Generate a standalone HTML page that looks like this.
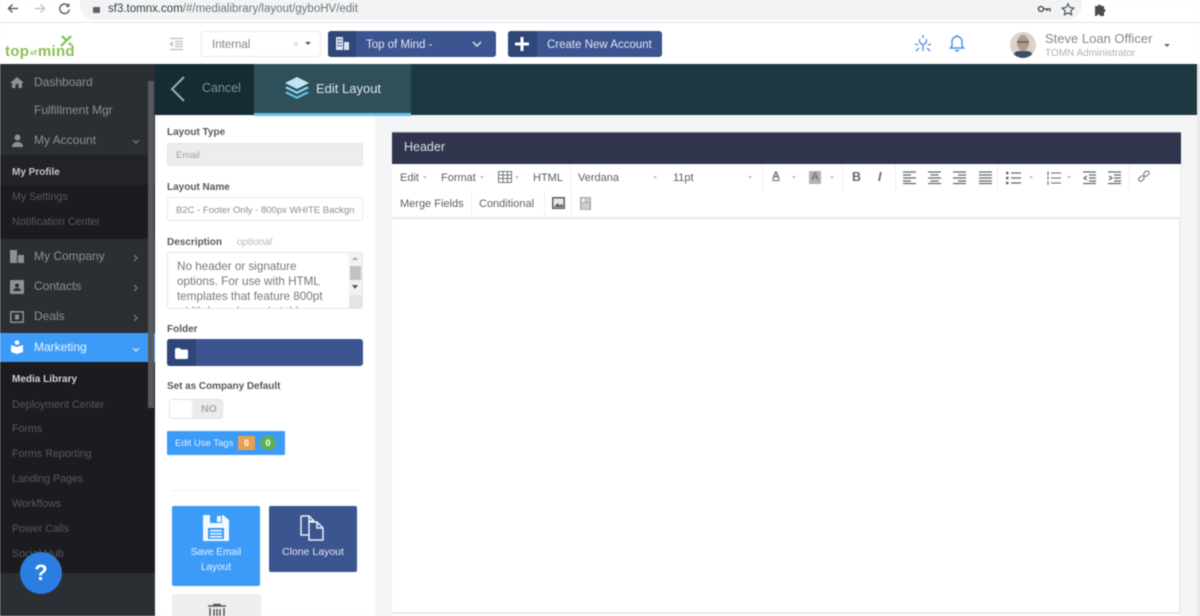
<!DOCTYPE html>
<html lang="en"><head><meta charset="utf-8"><title>Edit Layout</title>
<style>
*{box-sizing:border-box}
html,body{margin:0;padding:0;width:1200px;height:616px;overflow:hidden}
body{background:#f4f5f6;font-family:"Liberation Sans",sans-serif}
#w{position:relative;width:1200px;height:616px;overflow:hidden;filter:blur(.4px);background:#f4f5f6}
.a{position:absolute}
.t{position:absolute;white-space:nowrap;line-height:1}
svg{position:absolute;overflow:visible}
.side{color:#8d9094;font-size:12px}
.sub{color:#55585c;font-size:10.7px}
.lbl{color:#55595d;font-size:10px;font-weight:bold}
.tb{color:#5c5f63;font-size:11px}
.sep{position:absolute;width:1px;background:#eeeeee}
.caret{position:absolute;width:0;height:0;border-left:2.5px solid transparent;border-right:2.5px solid transparent;border-top:3px solid #c4c4c4}
</style></head><body><div id="w">
<!-- browser bar -->
<div class="a" style="left:0;top:0;width:1200px;height:23px;background:#fff;border-bottom:1px solid #e6e6e8"></div>
<div class="a" style="left:80px;top:-10px;width:1002px;height:30px;background:#f1f3f4;border-radius:15px"></div>
<svg style="left:0;top:0" width="100" height="20" fill="none" stroke="#5f6368" stroke-width="1.5"><path d="M18 8.5H9M12.5 4.5L8.5 8.5l4 4"/><path d="M35 8.5h9M40.500 4.500l4 4-4 4" stroke="#c3c5c8"/><path d="M68.500 6a4.800 4.800 0 1 0 .8 3.500"/><path d="M69.500 3v4h-4" fill="#5f6368" stroke="none"/></svg>
<div class="a" style="left:93px;top:7px;width:7px;height:6px;background:#5f6368;border-radius:1px"></div>
<div class="t" style="left:108px;top:4px;font-size:11.500px;color:#72767a"><span style="color:#3b3f43">sf3.tomnx.com</span>/#/medialibrary/layout/gyboHV/edit</div>
<svg style="left:1035px;top:3px" width="80" height="14"><circle cx="6" cy="6" r="2.500" fill="none" stroke="#55585c" stroke-width="1.500"/><path d="M8 6h7v2.500M12 6v2" fill="none" stroke="#55585c" stroke-width="1.500"/><path d="M33 .8l1.800 3.700 4 .5-3 2.800.8 4-3.600-2-3.600 2 .8-4-3-2.800 4-.5z" fill="none" stroke="#55585c" stroke-width="1.200"/><path d="M60 3h3a1.500 1.500 0 0 1 3 0h3v3a1.500 1.500 0 0 1 0 3v4h-4a1.500 1.500 0 0 0-3 0h-2z" fill="#4a4d51"/></svg>
<!-- top header -->
<div class="a" style="left:0;top:23px;width:1200px;height:41px;background:#fff"></div>
<div class="t" style="left:5px;top:44px;font-size:15px;font-weight:bold;color:#8abf55;letter-spacing:.3px">top<span style="font-size:7px;vertical-align:1px;letter-spacing:0;padding:0 1px">of</span>mind</div>
<svg style="left:58px;top:34px" width="16" height="14" fill="none" stroke="#7fc04a" stroke-width="2.200"><path d="M3 12L13 2M4 2l4 4"/><circle cx="12" cy="10" r="1.500" fill="#7fc04a" stroke="none"/></svg>
<svg style="left:169px;top:37px" width="15" height="14" fill="none" stroke="#a9acaf" stroke-width="1"><path d="M1 1.500h13M6 4.500h8M6 7h8M6 9.500h8M1 12.500h13"/><path d="M4 5L1.500 7 4 9" stroke-width="1.200"/></svg>
<div class="a" style="left:201px;top:31px;width:120px;height:26px;background:#fff;border:1px solid #e9eaeb;border-radius:3px"></div>
<div class="t" style="left:212px;top:40px;font-size:11.500px;color:#808488">Internal</div>
<div class="t" style="left:293px;top:40px;font-size:10px;color:#c0c2c4">×</div>
<div class="a" style="left:305px;top:42px;width:0;height:0;border-left:3px solid transparent;border-right:3px solid transparent;border-top:3px solid #55585c"></div>
<div class="a" style="left:328px;top:31px;width:168px;height:26px;background:#3c5590;border-radius:3px"></div>
<div class="a" style="left:328px;top:31px;width:28px;height:26px;background:#2f4679;border-radius:3px 0 0 3px"></div>
<svg style="left:335px;top:36px" width="15" height="15" fill="#dfe5f2"><path d="M1 1h7v13H1zM9 6h5v8H9z"/><path d="M2.500 3h1.500v1.500H2.500zM5 3h1.500v1.500H5zM2.500 6h1.500v1.500H2.500zM5 6h1.500v1.500H5zM2.500 9h1.500v1.500H2.500zM5 9h1.500v1.500H5z" fill="#3c5590"/></svg>
<div class="t" style="left:366px;top:40px;font-size:11.500px;color:#e2e7f2">Top of Mind -</div>
<svg style="left:472px;top:41px" width="10" height="7" fill="none" stroke="#dfe5f2" stroke-width="1.500"><path d="M1 1l4 4 4-4"/></svg>
<div class="a" style="left:508px;top:31px;width:154px;height:26px;background:#3c5590;border-radius:3px"></div>
<div class="a" style="left:508px;top:31px;width:29px;height:26px;background:#2f4679;border-radius:3px 0 0 3px"></div>
<svg style="left:515px;top:37px" width="14" height="14" fill="#fff"><path d="M5.500 0h3v5.500H14v3H8.500V14h-3V8.500H0v-3h5.500z"/></svg>
<div class="t" style="left:547px;top:40px;font-size:11.500px;color:#dfe5f2">Create New Account</div>
<svg style="left:914px;top:34px" width="18" height="19" fill="none" stroke="#4e97e8" stroke-width="1.400"><path d="M9 1v3M6 5a3.500 3.500 0 1 0 6 0"/><path d="M9 10v7M4 11l-3-1M14 11l3-1M5 14l-3 3M13 14l3 3"/></svg>
<svg style="left:949px;top:34px" width="16" height="18" fill="none" stroke="#4e97e8" stroke-width="1.500"><path d="M3 12V7.500a5 5 0 0 1 10 0V12l1.500 2h-13z"/><path d="M6.500 15.500a1.500 1.500 0 0 0 3 0"/><path d="M8 1v1.500"/></svg>
<div class="a" style="left:1010px;top:32px;width:26px;height:26px;border-radius:50%;background:#d9d4c8;overflow:hidden"><div class="a" style="left:7px;top:3px;width:12px;height:16px;border-radius:50%;background:#b39a88"></div><div class="a" style="left:7px;top:9px;width:12px;height:2px;background:#6a6d70"></div><div class="a" style="left:3px;top:19px;width:20px;height:9px;border-radius:6px 6px 0 0;background:#3b5068"></div></div>
<div class="t" style="left:1045px;top:32px;font-size:13px;color:#85888c">Steve Loan Officer</div>
<div class="t" style="left:1045px;top:49px;font-size:10px;color:#aeb1b4">TOMN Administrator</div>
<div class="a" style="left:1164px;top:44px;width:0;height:0;border-left:3px solid transparent;border-right:3px solid transparent;border-top:3px solid #66696d"></div>
<!-- sidebar -->
<div class="a" style="left:0;top:64px;width:155px;height:552px;background:#2b2e33"></div>
<div class="a" style="left:0;top:155px;width:155px;height:84px;background:#1b1c20"></div>
<div class="a" style="left:0;top:155px;width:155px;height:30px;background:#212327"></div>
<div class="a" style="left:0;top:362px;width:155px;height:211px;background:#1b1c20"></div>
<div class="a" style="left:0;top:333px;width:155px;height:29px;background:#3d9bf8"></div>
<div class="a" style="left:148px;top:81px;width:6px;height:327px;background:#57595c"></div>
<svg style="left:10px;top:76px" width="14" height="12" fill="#8f9195"><path d="M7 1L0 7h2v5h3.500V8h3v4H12V7h2z"/></svg>
<div class="t side" style="left:34px;top:76px">Dashboard</div>
<div class="t side" style="left:34px;top:104px">Fulfillment Mgr</div>
<svg style="left:11px;top:134px" width="13" height="13" fill="#8f9195"><circle cx="6.500" cy="3.500" r="3"/><path d="M1 13c0-3 2-5 5.500-5S12 10 12 13z"/></svg>
<div class="t side" style="left:34px;top:134px">My Account</div>
<svg style="left:132px;top:139px" width="8" height="5" fill="none" stroke="#7c7f83" stroke-width="1.200"><path d="M1 1l3 3 3-3"/></svg>
<div class="t" style="left:12px;top:168px;font-size:10px;font-weight:bold;color:#c4c6c8">My Profile</div>
<div class="t sub" style="left:12px;top:192px">My Settings</div>
<div class="t sub" style="left:12px;top:217px">Notification Center</div>
<svg style="left:10px;top:250px" width="14" height="13" fill="#8f9195"><path d="M0 0h7v13H0zM8 5h6v8H8z"/></svg>
<div class="t side" style="left:34px;top:250px">My Company</div>
<svg style="left:133px;top:254px" width="5" height="8" fill="none" stroke="#7c7f83" stroke-width="1.200"><path d="M1 1l3 3-3 3"/></svg>
<svg style="left:10px;top:280px" width="14" height="14" fill="#8f9195"><path d="M1 0h12a1 1 0 0 1 1 1v12a1 1 0 0 1-1 1H1a1 1 0 0 1-1-1V1a1 1 0 0 1 1-1z"/><circle cx="7" cy="5.500" r="2" fill="#2b2e33"/><path d="M3 11c0-2 2-3 4-3s4 1 4 3z" fill="#2b2e33"/></svg>
<div class="t side" style="left:34px;top:280px">Contacts</div>
<svg style="left:133px;top:284px" width="5" height="8" fill="none" stroke="#7c7f83" stroke-width="1.200"><path d="M1 1l3 3-3 3"/></svg>
<svg style="left:10px;top:311px" width="14" height="12" fill="none" stroke="#8f9195" stroke-width="1.500"><rect x=".8" y=".8" width="12.400" height="10.400"/><rect x="5" y="3.500" width="4" height="5" fill="#8f9195" stroke="none"/></svg>
<div class="t side" style="left:34px;top:310px">Deals</div>
<svg style="left:133px;top:314px" width="5" height="8" fill="none" stroke="#7c7f83" stroke-width="1.200"><path d="M1 1l3 3-3 3"/></svg>
<svg style="left:10px;top:340px" width="14" height="14" fill="#fff"><circle cx="7" cy="2.500" r="2.300"/><path d="M1 5l6 2 6-2v7l-6 2-6-2z"/></svg>
<div class="t" style="left:34px;top:341px;font-size:12px;color:#e9f3fe">Marketing</div>
<svg style="left:132px;top:347px" width="8" height="5" fill="none" stroke="#d9ebfe" stroke-width="1.200"><path d="M1 1l3 3 3-3"/></svg>
<div class="t" style="left:12px;top:375px;font-size:10px;font-weight:bold;color:#cfd1d3">Media Library</div>
<div class="t sub" style="left:12px;top:400px">Deployment Center</div>
<div class="t sub" style="left:12px;top:424px">Forms</div>
<div class="t sub" style="left:12px;top:449px">Forms Reporting</div>
<div class="t sub" style="left:12px;top:474px">Landing Pages</div>
<div class="t sub" style="left:12px;top:499px">Workflows</div>
<div class="t sub" style="left:12px;top:524px">Power Calls</div>
<div class="t sub" style="left:12px;top:549px">Social Hub</div>
<div class="a" style="left:20px;top:552px;width:42px;height:42px;border-radius:50%;background:#2a7de1"></div>
<div class="t" style="left:20px;top:562px;width:42px;text-align:center;font-size:22px;font-weight:bold;color:#fff">?</div>
<!-- teal bar -->
<div class="a" style="left:155px;top:64px;width:1045px;height:51px;background:#1c3942"></div>
<div class="a" style="left:155px;top:64px;width:99px;height:51px;background:#152c34"></div>
<div class="a" style="left:254px;top:64px;width:157px;height:52px;background:#2f5059;border-bottom:3px solid #62c4ef"></div>
<svg style="left:170px;top:75px" width="16" height="28" fill="none" stroke="#9fa9ad" stroke-width="2"><path d="M14 2L2 14l12 12"/></svg>
<div class="t" style="left:202px;top:82px;font-size:12.500px;color:#84908f">Cancel</div>
<svg style="left:284px;top:76px" width="26" height="25"><path d="M13 1L25 7 13 13 1 7z" fill="#bfe6f7"/><path d="M3 10.500L13 15.500 23 10.500 25 12 13 18 1 12z" fill="#8fd2f1"/><path d="M3 15.500L13 20.500 23 15.500 25 17 13 23 1 17z" fill="#62bfea"/></svg>
<div class="t" style="left:316px;top:82px;font-size:13px;color:#dfe7e9">Edit Layout</div>
<!-- form panel -->
<div class="a" style="left:155px;top:116px;width:220px;height:500px;background:#fff"></div>
<div class="t lbl" style="left:167px;top:128px">Layout Type</div>
<div class="a" style="left:167px;top:143px;width:196px;height:23px;background:#ecedef;border:1px solid #e3e4e6;border-radius:2px"></div>
<div class="t" style="left:176px;top:151px;font-size:9.500px;color:#9a9d9f">Email</div>
<div class="t lbl" style="left:167px;top:183px">Layout Name</div>
<div class="a" style="left:167px;top:197px;width:196px;height:24px;background:#fff;border:1px solid #e8e9ea;border-radius:2px"></div>
<div class="t" style="left:176px;top:206px;font-size:9.500px;color:#8a8d90;width:182px;overflow:hidden">B2C - Footer Only - 800px WHITE Backgn</div>
<div class="t lbl" style="left:167px;top:238px">Description</div>
<div class="t" style="left:237px;top:238px;font-size:10px;font-style:italic;color:#b5b7b9">optional</div>
<div class="a" style="left:167px;top:252px;width:196px;height:57px;background:#fff;border:1px solid #e4e5e6;border-radius:3px;overflow:hidden"><div style="padding:6px 0 0 9px;font-size:11.700px;line-height:15px;color:#75787b;width:178px">No header or signature<br>options. For use with HTML<br>templates that feature 800pt<br>width by a dynamic table</div></div>
<div class="a" style="left:349px;top:253px;width:13px;height:55px;background:#f2f2f2"></div>
<div class="a" style="left:350px;top:266px;width:11px;height:14px;background:#c2c2c2"></div>
<div class="a" style="left:352px;top:285px;width:0;height:0;border-left:3px solid transparent;border-right:3px solid transparent;border-top:4px solid #55585c"></div>
<div class="a" style="left:352px;top:257px;width:0;height:0;border-left:3px solid transparent;border-right:3px solid transparent;border-bottom:3px solid #a9a9a9"></div>
<div class="a" style="left:349px;top:295px;width:13px;height:13px;background:#e4e4e4"></div>
<div class="t lbl" style="left:167px;top:325px">Folder</div>
<div class="a" style="left:167px;top:339px;width:196px;height:27px;background:#3c5590;border-radius:3px"></div>
<div class="a" style="left:167px;top:339px;width:29px;height:27px;background:#2f4679;border-radius:3px 0 0 3px"></div>
<svg style="left:175px;top:348px" width="13" height="11" fill="#fff"><path d="M0 1.500C0 .700.600 0 1.400 0H5l1 1.500h5.600c.8 0 1.400.6 1.400 1.400v6.700c0 .8-.6 1.400-1.400 1.400H1.400C.6 11 0 10.400 0 9.600z"/></svg>
<div class="t lbl" style="left:167px;top:382px;letter-spacing:-.05px">Set as Company Default</div>
<div class="a" style="left:169px;top:399px;width:54px;height:20px;background:#ebebec;border:1px solid #e2e2e3;border-radius:3px"></div>
<div class="a" style="left:170px;top:400px;width:22px;height:18px;background:#fff;border-radius:2px"></div>
<div class="t" style="left:201px;top:404px;font-size:10.500px;font-weight:bold;color:#a8aaac">NO</div>
<div class="a" style="left:167px;top:431px;width:118px;height:24px;background:#3d9bf8;border-radius:1px"></div>
<div class="t" style="left:175px;top:439px;font-size:9.500px;color:#dfeefe">Edit Use Tags</div>
<div class="a" style="left:238px;top:436px;width:17px;height:14px;background:#e8a14e;border-radius:1px"></div>
<div class="t" style="left:238px;top:439px;width:17px;text-align:center;font-size:9px;font-weight:bold;color:#fff">0</div>
<div class="a" style="left:260px;top:436px;width:16px;height:14px;background:#5fb14f;border-radius:7px"></div>
<div class="t" style="left:260px;top:439px;width:16px;text-align:center;font-size:9px;font-weight:bold;color:#fff">0</div>
<div class="a" style="left:172px;top:490px;width:185px;height:1px;background:#f0f0f0"></div>
<div class="a" style="left:172px;top:506px;width:88px;height:80px;background:#3d9bf8;border-radius:2px"></div>
<svg style="left:203px;top:515px" width="26" height="26" fill="#f2f8ff"><path d="M1 0h19l6 5v20a1 1 0 0 1-1 1H1a1 1 0 0 1-1-1V1a1 1 0 0 1 1-1z"/><path d="M7 0h12v8H7z" fill="#3d9bf8"/><path d="M14 1h4v6h-4z" fill="#f2f8ff"/><path d="M5 13h16v11H5z" fill="#3d9bf8"/><path d="M7 15h12v1.500H7zM7 18h12v1.500H7zM7 21h12v1.500H7z"/></svg>
<div class="t" style="left:172px;top:546px;width:88px;text-align:center;font-size:10px;color:#e3f0fe;line-height:14.500px;white-space:normal">Save Email<br>Layout</div>
<div class="a" style="left:269px;top:506px;width:88px;height:66px;background:#3c5590;border-radius:2px"></div>
<svg style="left:300px;top:515px" width="27" height="27" fill="none" stroke="#eaeef6" stroke-width="1.500"><path d="M1 1h8l5 5v5M1 1v19h8"/><path d="M9 1v5h5"/><path d="M9 7h8l6 6v12H9z" fill="#3c5590"/><path d="M17 7v6h6"/></svg>
<div class="t" style="left:269px;top:547px;width:88px;text-align:center;font-size:10.500px;color:#dfe5f2">Clone Layout</div>
<div class="a" style="left:172px;top:594px;width:89px;height:30px;background:#efefef;border-radius:3px"></div>
<svg style="left:208px;top:604px" width="18" height="14" fill="none" stroke="#55585c" stroke-width="1.500"><path d="M0 2h18M6 2V.500h6V2M2 4v11h14V4M6 5v9M9 5v9M12 5v9"/></svg>
<!-- editor -->
<div class="a" style="left:392px;top:132px;width:789px;height:32px;background:#30354d;border-top:1px solid #71758a"></div>
<div class="t" style="left:404px;top:141px;font-size:12.500px;color:#dfe1e7">Header</div>
<div class="a" style="left:392px;top:164px;width:789px;height:55px;background:#fff;border-bottom:2px solid #e8e8e8;border-right:1px solid #eee"></div>
<div class="a" style="left:392px;top:219px;width:789px;height:393px;background:#fff;border-right:2px solid #ededed"></div>
<div class="a" style="left:392px;top:612px;width:789px;height:4px;background:#fff;border-top:2px solid #e8e8e8"></div>
<div class="t tb" style="left:400px;top:173px">Edit</div><div class="caret" style="left:423px;top:176px"></div>
<div class="t tb" style="left:441px;top:173px">Format</div><div class="caret" style="left:480px;top:176px"></div>
<svg style="left:498px;top:171px" width="14" height="12" fill="none" stroke="#77797c"><path d="M.500.500h13v11H.500zM.500 4h13M.500 7.500h13M5 .500v11M9.500.500v11"/></svg><div class="caret" style="left:515px;top:176px"></div>
<div class="t tb" style="left:533px;top:173px">HTML</div>
<div class="sep" style="left:570px;top:164px;height:27px"></div>
<div class="t tb" style="left:578px;top:173px">Verdana</div><div class="caret" style="left:653px;top:176px"></div>
<div class="t tb" style="left:673px;top:173px">11pt</div><div class="caret" style="left:748px;top:176px"></div>
<div class="sep" style="left:762px;top:164px;height:27px"></div>
<div class="t" style="left:772px;top:171px;font-size:11px;font-weight:bold;color:#66686b;text-decoration:underline">A</div><div class="caret" style="left:792px;top:176px"></div>
<div class="a" style="left:809px;top:171px;width:12px;height:13px;background:#b3b3b3"></div><div class="t" style="left:811px;top:172px;font-size:11px;font-weight:bold;color:#77797c">A</div><div class="caret" style="left:830px;top:176px"></div>
<div class="sep" style="left:842px;top:164px;height:27px"></div>
<div class="t" style="left:852px;top:171px;font-size:12.500px;font-weight:bold;color:#66686b">B</div>
<div class="t" style="left:878px;top:171px;font-size:12.500px;font-weight:bold;font-style:italic;color:#66686b">I</div>
<div class="sep" style="left:895px;top:164px;height:27px"></div>
<svg style="left:903px;top:171px" width="240" height="14" fill="none" stroke="#66686b" stroke-width="1.300">
<path d="M0 1h13M0 4h8M0 7h13M0 10h8M0 12.500h13"/>
<path d="M25 1h13M27.500 4h8M25 7h13M27.500 10h8M25 12.500h13"/>
<path d="M50 1h13M55 4h8M50 7h13M55 10h8M50 12.500h13"/>
<path d="M76 1h13M76 4h13M76 7h13M76 10h13M76 12.500h13"/>
<path d="M108 2h10M108 7h10M108 12h10"/><path d="M103 2h2.500M103 7h2.500M103 12h2.500" stroke-width="2.500"/>
<path d="M148 2h10M148 7h10M148 12h10M145 .500v4M145 5.500v3M145 10v4" stroke-width="1.100"/>
<path d="M180 1h13M186 4h7M186 7h7M186 10h7M180 12.500h13M184 5L181 7l3 2"/>
<path d="M205 1h13M211 4h7M211 7h7M211 10h7M205 12.500h13M206 5l3 2-3 2"/>
</svg>
<div class="caret" style="left:1029px;top:176px"></div><div class="caret" style="left:1067px;top:176px"></div>
<div class="sep" style="left:997px;top:164px;height:27px"></div>
<div class="sep" style="left:1129px;top:164px;height:27px"></div>
<svg style="left:1136px;top:170px" width="14" height="14" fill="none" stroke="#888a8d" stroke-width="1.300"><rect x="-1" y="-2" width="6" height="4" rx="2" transform="translate(4 10) rotate(-45)"/><rect x="-1" y="-2" width="6" height="4" rx="2" transform="translate(9 5) rotate(-45)"/></svg>
<div class="t tb" style="left:400px;top:199px">Merge Fields</div>
<div class="sep" style="left:471px;top:191px;height:27px"></div>
<div class="t tb" style="left:479px;top:199px">Conditional</div>
<div class="sep" style="left:544px;top:191px;height:27px"></div>
<svg style="left:552px;top:197px" width="13" height="12"><rect width="13" height="12" fill="#5c5e61"/><rect x="1.500" y="1.500" width="10" height="9" fill="#e9e9e9"/><path d="M2 10l3.500-4 2.500 2.500L10 6.500l1.500 3.500z" fill="#5c5e61"/></svg>
<div class="sep" style="left:571px;top:191px;height:27px"></div>
<svg style="left:580px;top:197px" width="11" height="13"><rect width="11" height="13" fill="#a9abad"/><rect x="1.500" y="1.500" width="3.500" height="3.500" fill="#f2f2f2"/><path d="M6 2h3.500M6 4h3.500M1.500 7h8M1.500 9h8M1.500 11h8" stroke="#f2f2f2"/></svg>
<!-- page scrollbar -->
<div class="a" style="left:1197px;top:64px;width:3px;height:552px;background:#e9e9ea"></div>
</div></body></html>
